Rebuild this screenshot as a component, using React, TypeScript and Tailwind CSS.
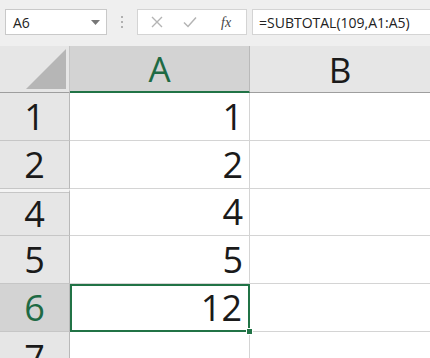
const ROWS = [
  { label: "1", value: "1" },
  { label: "2", value: "2" },
  { label: "4", value: "4", hiddenAbove: true },
  { label: "5", value: "5" },
  { label: "6", value: "12", active: true },
];

export default function App() {
  return (
    <div className="w-[430px] h-[358px] overflow-hidden bg-white flex flex-col font-['Open_Sans',sans-serif] text-[#1a1a1a]">
      {/* formula bar */}
      <div className="h-[46px] shrink-0 bg-[#efefef] flex items-start pt-[9px] pl-[5px]">
        <div className="w-[102px] h-[26px] bg-white border border-[#c9c9c9] flex items-center justify-between pl-[7px] pr-[6px]">
          <span className="text-[14px] text-[#222]">A6</span>
          <svg width="9" height="5" viewBox="0 0 9 5"><path d="M0 0h9L4.5 5z" fill="#777" /></svg>
        </div>
        <div className="w-[30px] h-[26px] flex flex-col items-center justify-center gap-[3px]">
          <span className="w-[2px] h-[2px] bg-[#b0b0b0]" />
          <span className="w-[2px] h-[2px] bg-[#b0b0b0]" />
          <span className="w-[2px] h-[2px] bg-[#b0b0b0]" />
        </div>
        <div className="w-[110px] h-[26px] bg-white border border-[#d4d4d4] flex items-center pl-[13px]">
          <svg width="12" height="12" viewBox="0 0 12 12"><path d="M1 1l10 10M11 1L1 11" stroke="#b4b4b4" strokeWidth="1.4" /></svg>
          <svg className="ml-[20px]" width="14" height="12" viewBox="0 0 14 12"><path d="M1 6.5l4 4L13 1.5" stroke="#b4b4b4" strokeWidth="1.5" fill="none" /></svg>
          <span className="ml-[24px] text-[14px] italic text-[#444] font-['Liberation_Serif',serif]">fx</span>
        </div>
        <div className="ml-[5px] flex-1 h-[26px] bg-white border border-[#d4d4d4] border-r-0 flex items-center pl-[6px]">
          <span className="text-[14px] text-[#222]">=SUBTOTAL(109,A1:A5)</span>
        </div>
      </div>

      {/* column headers */}
      <div className="h-[47px] shrink-0 flex">
        <div className="w-[70px] bg-[#e6e6e6] border-r border-[#c6c6c6] border-b border-b-[#9e9e9e] relative">
          <svg className="absolute right-[3px] bottom-[3px]" width="40" height="40" viewBox="0 0 40 40"><path d="M40 0V40H0z" fill="#b6b6b6" /></svg>
        </div>
        <div className="w-[180px] bg-[#d3d3d3] border-r border-[#b9b9b9] border-b-2 border-b-[#217346] flex items-center justify-center">
          <span className="text-[35px] leading-none text-[#1e6a44]">A</span>
        </div>
        <div className="flex-1 bg-[#e6e6e6] border-b border-b-[#9e9e9e] flex items-center justify-center">
          <span className="text-[35px] leading-none">B</span>
        </div>
      </div>

      {/* rows */}
      {ROWS.map((r) => (
        <div key={r.label} className={`${r.hiddenAbove ? "h-[47px]" : "h-[48px]"} shrink-0 flex`}>
          <div
            className={`w-[70px] border-r border-[#b9b9b9] border-b border-b-[#c6c6c6] flex items-center justify-center ${r.active ? "bg-[#d3d3d3] text-[#1e6a44]" : "bg-[#e6e6e6]"} ${r.hiddenAbove ? "border-t-[3px] border-t-[#f4f4f4] shadow-[inset_0_1px_0_#c6c6c6]" : ""}`}
          >
            <span className="text-[36px] leading-none">{r.label}</span>
          </div>
          <div
            className={`w-[180px] flex items-center justify-end pr-[6px] relative ${r.active ? "border-2 border-[#217346]" : "border-r border-[#d4d4d4] border-b border-b-[#d4d4d4]"}`}
          >
            <span className="text-[36px] leading-none">{r.value}</span>
            {r.active && <span className="absolute right-[-5px] bottom-[-5px] w-[7px] h-[7px] bg-[#217346] border border-white" />}
          </div>
          <div className="flex-1 border-b border-[#d4d4d4]" />
        </div>
      ))}
      <div className="h-[30px] shrink-0 flex">
        <div className="w-[70px] bg-[#e6e6e6] border-r border-[#b9b9b9] flex justify-center pt-[8px]">
          <span className="text-[36px] leading-none">7</span>
        </div>
        <div className="w-[180px] border-r border-[#d4d4d4]" />
        <div className="flex-1" />
      </div>
    </div>
  );
}
